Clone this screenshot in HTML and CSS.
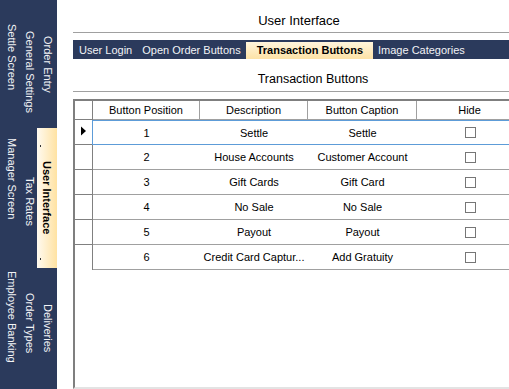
FILE: index.html
```html
<!DOCTYPE html>
<html>
<head>
<meta charset="utf-8">
<link rel="stylesheet" href="styles.css">
</head>
<body>
<div class="app">
  <nav class="side">
    <div class="scol col-a">
      <div class="stab h114"><span class="vt">Settle Screen</span></div>
      <div class="stab h130"><span class="vt">Manager Screen</span></div>
      <div class="stab fill"><span class="vt">Employee Banking</span></div>
    </div>
    <div class="scol col-b">
      <div class="stab h144"><span class="vt">General Settings</span></div>
      <div class="stab h114"><span class="vt">Tax Rates</span></div>
      <div class="stab fill"><span class="vt">Order Types</span></div>
    </div>
    <div class="scol col-c">
      <div class="stab h128"><span class="vt">Order Entry</span></div>
      <div class="stab h140 active"><span class="vt">User Interface</span></div>
      <div class="stab fill"><span class="vt">Deliveries</span></div>
    </div>
  </nav>
  <main class="content">
    <div class="title">User Interface</div>
    <div class="tabs">
      <span class="tab">User Login</span>
      <span class="tab">Open Order Buttons</span>
      <span class="tab active">Transaction Buttons</span>
      <span class="tab">Image Categories</span>
    </div>
    <div class="heading">Transaction Buttons</div>
    <div class="grid">
      <div class="row head">
        <div class="rh"></div>
        <div class="cells">
          <div class="c w1">Button Position</div>
          <div class="c w2">Description</div>
          <div class="c w3">Button Caption</div>
          <div class="c w4">Hide</div>
        </div>
      </div>
      <div class="row sel">
        <div class="rh"><svg class="arrow" width="6" height="10" viewBox="0 0 6 10"><path d="M0 0.5 L5 5 L0 9.5 Z" fill="#000"/></svg></div>
        <div class="cells">
          <div class="c w1">1</div>
          <div class="c w2">Settle</div>
          <div class="c w3">Settle</div>
          <div class="c w4"><span class="cb"></span></div>
        </div>
      </div>
      <div class="row">
        <div class="rh"></div>
        <div class="cells">
          <div class="c w1">2</div>
          <div class="c w2">House Accounts</div>
          <div class="c w3">Customer Account</div>
          <div class="c w4"><span class="cb"></span></div>
        </div>
      </div>
      <div class="row">
        <div class="rh"></div>
        <div class="cells">
          <div class="c w1">3</div>
          <div class="c w2">Gift Cards</div>
          <div class="c w3">Gift Card</div>
          <div class="c w4"><span class="cb"></span></div>
        </div>
      </div>
      <div class="row">
        <div class="rh"></div>
        <div class="cells">
          <div class="c w1">4</div>
          <div class="c w2">No Sale</div>
          <div class="c w3">No Sale</div>
          <div class="c w4"><span class="cb"></span></div>
        </div>
      </div>
      <div class="row">
        <div class="rh"></div>
        <div class="cells">
          <div class="c w1">5</div>
          <div class="c w2">Payout</div>
          <div class="c w3">Payout</div>
          <div class="c w4"><span class="cb"></span></div>
        </div>
      </div>
      <div class="row last">
        <div class="rh"></div>
        <div class="cells">
          <div class="c w1">6</div>
          <div class="c w2">Credit Card Captur...</div>
          <div class="c w3">Add Gratuity</div>
          <div class="c w4"><span class="cb"></span></div>
        </div>
      </div>
    </div>
  </main>
</div>
</body>
</html>
```
FILE: styles.css
```css
html, body {
  margin: 0;
  padding: 0;
}
body {
  width: 509px;
  height: 389px;
  overflow: hidden;
  background: #ffffff;
  font-family: "Liberation Sans", Arial, sans-serif;
  font-size: 11px;
  color: #000;
}
.app {
  display: flex;
  height: 389px;
}

/* Left vertical tab strip */
.side {
  width: 57px;
  flex: none;
  box-sizing: border-box;
  padding-left: 2px;
  background: #2b3a5c;
  display: flex;
  color: #f2f3f6;
}
.scol {
  display: flex;
  flex-direction: column;
}
.col-a { width: 19px; }
.col-b { width: 18px; }
.col-c { width: 18px; }
.stab {
  flex: none;
  display: flex;
  align-items: center;
  justify-content: center;
}
.stab.fill { flex: 1; }
.h114 { height: 114px; }
.h128 { height: 128px; }
.h130 { height: 130px; }
.h140 { height: 140px; }
.h144 { height: 144px; }
.vt {
  writing-mode: vertical-rl;
  white-space: nowrap;
  line-height: 18px;
}
.stab.active {
  position: relative;
  margin-left: -2px;
  background: linear-gradient(to right, #fffaf0, #ffe2a2);
  color: #000;
  font-weight: bold;
}
.stab.active::before,
.stab.active::after {
  content: "";
  position: absolute;
  left: 3px;
  width: 1px;
  height: 2px;
  background: #333;
}
.stab.active::before { top: 17px; }
.stab.active::after { top: 130px; }

/* Content */
.content {
  flex: 1;
  min-width: 0;
  overflow: hidden;
  padding-left: 16px;
}
.title {
  height: 19px;
  padding: 13px 0 0 16px;
  line-height: 15px;
  font-size: 13px;
  text-align: center;
  border-bottom: 1px solid #a0a0a0;
}
.tabs {
  margin-top: 7px;
  height: 19px;
  background: #2b3a5c;
  display: flex;
  align-items: flex-end;
  padding-left: 1px;
}
.tab {
  height: 17px;
  line-height: 16px;
  padding: 0 5px;
  color: #f2f3f6;
  white-space: nowrap;
}
.tab.active {
  padding: 0 10px 0 11px;
  background: linear-gradient(#fff5dc, #fde2a6);
  color: #000;
  font-weight: bold;
}
.heading {
  height: 19px;
  padding: 13px 0 0 44px;
  line-height: 14px;
  font-size: 12.5px;
  text-align: center;
  border-bottom: 1px solid #a0a0a0;
}

/* Data grid */
.grid {
  margin-top: 7px;
  width: 452px;
  height: 290px;
  box-sizing: border-box;
  border: 2px solid;
  border-color: #7f7f7f #e3e3e3 #e3e3e3 #7f7f7f;
  background: #fff;
}
.row {
  display: flex;
}
.rh {
  flex: none;
  width: 18px;
  box-sizing: border-box;
  border-right: 1px solid #808080;
  border-bottom: 1px solid #808080;
  display: flex;
  align-items: center;
  padding-left: 6px;
}
.row.last .rh { border-bottom: none; }
.arrow { display: block; margin-top: -3px; }
.cells {
  display: flex;
}
.c {
  flex: none;
  box-sizing: border-box;
  height: 25px;
  border-bottom: 1px solid #a0a0a0;
  display: flex;
  align-items: center;
  justify-content: center;
  white-space: nowrap;
}
.w1 { width: 107px; }
.w2 { width: 108px; }
.w3 { width: 109px; }
.w4 { width: 106px; }
.head .c {
  height: 19px;
  border-right: 1px solid #a0a0a0;
}
.sel .cells {
  margin-left: -1px;
  border: 1px solid #5d9cd8;
  border-right: none;
}
.sel .c {
  height: 23px;
  border-bottom: none;
}
.cb {
  display: block;
  width: 11px;
  height: 11px;
  box-sizing: border-box;
  border: 1px solid #767676;
  background: #fff;
  margin-left: 1px;
}
```
